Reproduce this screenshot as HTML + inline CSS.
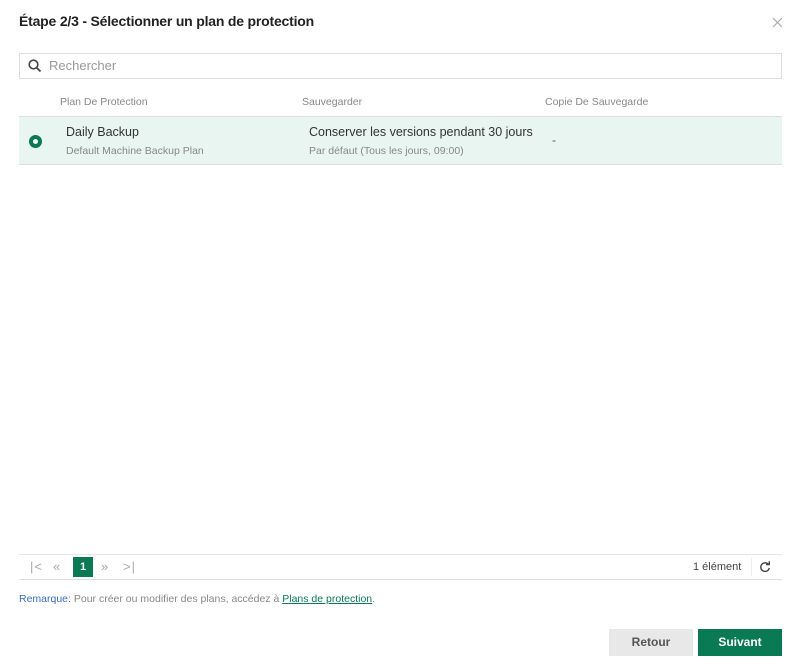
<!DOCTYPE html>
<html><head><meta charset="utf-8"><style>
*{box-sizing:border-box;margin:0;padding:0}
body{width:800px;height:667px;background:#fff;font-family:"Liberation Sans",sans-serif;position:relative;overflow:hidden;color:#333}
.a{position:absolute;white-space:nowrap}
</style></head><body>
<div class="a" style="left:19px;top:13px;font-size:14px;font-weight:bold;color:#222;letter-spacing:-0.2px">Étape 2/3 - Sélectionner un plan de protection</div>
<svg class="a" style="left:772px;top:17px" width="11" height="11"><path d="M1 1L10 10M10 1L1 10" stroke="#aaa" stroke-width="1.2"/></svg>
<div class="a" style="left:19px;top:53px;width:763px;height:26px;border:1px solid #ddd"></div>
<svg class="a" style="left:28px;top:59px" width="14" height="14"><circle cx="5.5" cy="5.5" r="4.3" fill="none" stroke="#444" stroke-width="1.6"/><path d="M8.5 8.5L12.5 12.5" stroke="#444" stroke-width="1.8"/></svg>
<div class="a" style="left:49px;top:58px;font-size:13px;color:#999">Rechercher</div>
<div class="a" style="left:60px;top:96px;font-size:10.5px;color:#888">Plan De Protection</div>
<div class="a" style="left:302px;top:96px;font-size:10.5px;color:#888">Sauvegarder</div>
<div class="a" style="left:545px;top:96px;font-size:10.5px;color:#888">Copie De Sauvegarde</div>
<div class="a" style="left:19px;top:116px;width:763px;height:49px;background:#e8f5f0;border-top:1px solid #dde;border-bottom:1px solid #dde"></div>
<div class="a" style="left:29px;top:135px;width:13px;height:13px;border-radius:50%;border:4px solid #0a7a55;background:#fff"></div>
<div class="a" style="left:66px;top:125px;font-size:12.5px;color:#333">Daily Backup</div>
<div class="a" style="left:66px;top:145px;font-size:10.5px;color:#888">Default Machine Backup Plan</div>
<div class="a" style="left:309px;top:125px;font-size:12.5px;color:#333">Conserver les versions pendant 30 jours</div>
<div class="a" style="left:309px;top:145px;font-size:10.5px;color:#888">Par défaut (Tous les jours, 09:00)</div>
<div class="a" style="left:552px;top:133px;font-size:12px;color:#555">-</div>
<div class="a" style="left:19px;top:554px;width:763px;height:26px;border-top:1px solid #e6e6e6;border-bottom:1px solid #ddd"></div>
<div class="a" style="left:30px;top:559px;font-size:13px;color:#aaa;letter-spacing:1px">|&lt;</div>
<div class="a" style="left:53px;top:559px;font-size:13px;color:#aaa">«</div>
<div class="a" style="left:73px;top:557px;width:20px;height:20px;background:#0a7a55;color:#fff;font-size:11px;font-weight:bold;text-align:center;line-height:20px">1</div>
<div class="a" style="left:101px;top:559px;font-size:13px;color:#aaa">»</div>
<div class="a" style="left:123px;top:559px;font-size:13px;color:#aaa;letter-spacing:1px">&gt;|</div>
<div class="a" style="left:693px;top:561px;font-size:11px;color:#444">1 élément</div>
<div class="a" style="left:751px;top:558px;width:1px;height:18px;background:#eee"></div>
<svg class="a" style="left:759px;top:561px" width="12" height="12"><path d="M9.5 3.5A4.3 4.3 0 1 0 10.3 7" fill="none" stroke="#444" stroke-width="1.4"/><path d="M7 3.5H10.3V0.3" fill="none" stroke="#444" stroke-width="1.4"/></svg>
<div class="a" style="left:19px;top:593px;font-size:10.5px;color:#888"><span style="color:#3a6fc0">Remarque:</span> Pour créer ou modifier des plans, accédez à <span style="color:#0a7a55;text-decoration:underline">Plans de protection</span>.</div>
<div class="a" style="left:609px;top:629px;width:84px;height:27px;background:#e8e8e8;font-size:12px;font-weight:bold;color:#555;text-align:center;line-height:27px">Retour</div>
<div class="a" style="left:698px;top:629px;width:84px;height:27px;background:#0a7a55;font-size:12px;font-weight:bold;color:#fff;text-align:center;line-height:27px">Suivant</div>
</body></html>
